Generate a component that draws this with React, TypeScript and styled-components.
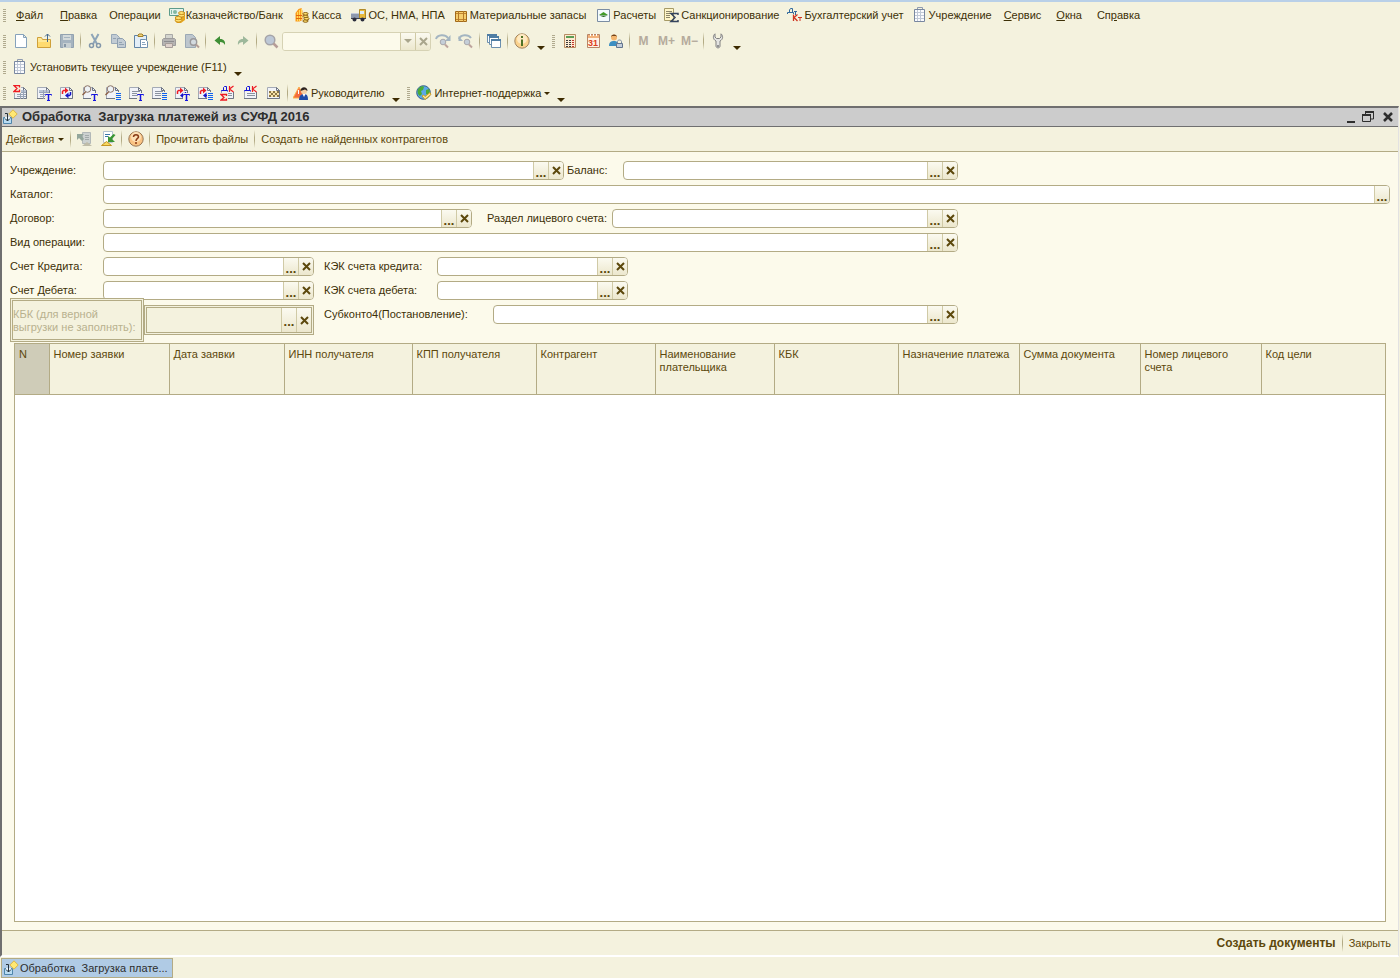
import React, { ReactNode } from "react";
import styled, { createGlobalStyle } from "styled-components";

const GlobalStyle = createGlobalStyle`
  * { box-sizing: border-box; }
  body {
    margin: 0;
    background: #f4f2de;
    color: #3d3006;
    font: 11px/13px "Liberation Sans", Arial, sans-serif;
  }
  button, input { font: inherit; color: inherit; }
  svg { display: block; flex: none; }
`;

const line = "#b3ab85";

const Shell = styled.div`
  display: flex;
  flex-direction: column;
  min-height: 100vh;
  border-top: 2px solid #b9d0e8;
`;

const Bar = styled.div`
  display: flex;
  align-items: center;
  height: 26px;
  white-space: nowrap;
`;

const Grip = styled.span<{ $before?: number; $after?: number }>`
  flex: none;
  width: 3px;
  height: 13px;
  margin: 0 ${(p) => p.$after ?? 3}px 0 ${(p) => p.$before ?? 3}px;
  background: repeating-linear-gradient(#b0aa8e 0 1px, transparent 1px 2px);
`;

const Separator = styled.span`
  flex: none;
  width: 1px;
  height: 18px;
  margin: 0 2px;
  background: linear-gradient(transparent, ${line} 40%, ${line} 60%, transparent);
`;

const MenuItem = styled.button<{ $gap: number }>`
  display: flex;
  align-items: center;
  gap: 1px;
  height: 22px;
  margin: 0 ${(p) => p.$gap}px 0 0;
  padding: 0;
  border: 0;
  background: none;
`;

const IconButton = styled.button`
  display: flex;
  flex: none;
  align-items: center;
  justify-content: center;
  width: 23px;
  height: 22px;
  padding: 0;
  border: 0;
  background: none;
`;

const WindowButton = styled(IconButton)`
  width: 20px;
  height: 18px;
`;

const MemoryButton = styled(IconButton)`
  color: #b5ab9c;
  font-size: 12px;
  font-weight: bold;
`;

const TextButton = styled.button<{ $strong?: boolean }>`
  display: flex;
  align-items: center;
  gap: 4px;
  height: 22px;
  padding: 0 4px;
  border: 0;
  background: none;
  color: #5c480c;
  font-size: ${(p) => (p.$strong ? 12 : 11)}px;
  font-weight: ${(p) => (p.$strong ? "bold" : "normal")};
`;

const LaunchButton = styled(TextButton)`
  gap: 2px;
  padding: 0 4px 0 3px;
  color: inherit;
`;

const OverflowButton = styled.button`
  display: flex;
  flex: none;
  align-items: flex-end;
  justify-content: center;
  width: 15px;
  height: 18px;
  padding: 0;
  border: 0;
  background: none;
`;

const Search = styled.div`
  display: flex;
  width: 149px;
  height: 19px;
  border: 1px solid #d6d2b4;
  border-radius: 3px;
  overflow: hidden;
`;

const SearchInput = styled.input`
  flex: 1;
  min-width: 0;
  padding: 0 3px;
  border: 0;
  outline: 0;
  background: #fcfaeb;
`;

const Window = styled.main`
  display: flex;
  flex: 1;
  flex-direction: column;
  margin-right: 1px;
  border: solid #6f6f6f;
  border-width: 2px 0 0 2px;
  border-right: 1px solid #e2e2e2;
  border-bottom: 2px solid #fff;
  background: #fcfaeb;
`;

const TitleBar = styled.header`
  display: flex;
  align-items: center;
  height: 19px;
  border-bottom: 1px solid #6f6f6f;
  background: #ccc;
  color: #2e2e2e;
`;

const Title = styled.h1`
  flex: 1;
  margin: 0 0 0 4px;
  font-size: 13px;
  line-height: 16px;
  white-space: pre;
`;

const CommandBar = styled(Bar)`
  height: 25px;
  border-bottom: 1px solid ${line};
  background: #f4f2de;
`;

const Form = styled.form`
  display: flex;
  flex-direction: column;
  gap: 5px;
  padding: 9px 8px 0;
`;

const FormRow = styled.div`
  display: flex;
  align-items: flex-start;
  white-space: nowrap;
`;

const Label = styled.label<{ $width: number; $indent?: number }>`
  flex: none;
  width: ${(p) => p.$width}px;
  margin-left: ${(p) => p.$indent ?? 0}px;
  line-height: 19px;
`;

const FieldBox = styled.div<{ $width?: number }>`
  display: flex;
  flex: ${(p) => (p.$width ? `0 0 ${p.$width}px` : "1")};
  height: 19px;
  border: 1px solid ${line};
  border-radius: 4px;
  background: #fff;
  overflow: hidden;
`;

const LockedFieldBox = styled(FieldBox)`
  height: 30px;
  border: 3px double ${line};
  border-radius: 0;
  background: #f4f2de;
`;

const LockedLabel = styled.label`
  flex: none;
  width: 134px;
  height: 44px;
  margin-top: -7px;
  padding: 7px 0 0;
  border: 3px double ${line};
  background: #f4f2de;
  color: #b8b18e;
`;

const FieldInput = styled.input`
  flex: 1;
  min-width: 0;
  padding: 0 3px;
  border: 0;
  outline: 0;
  background: transparent;
`;

const FieldButton = styled.button`
  display: flex;
  flex: none;
  align-items: center;
  justify-content: center;
  width: 15px;
  padding: 0;
  border: 0;
  border-left: 1px solid #d0caa6;
  background: linear-gradient(#fbfaf0, #ece7cd);
  color: #5c480c;
  font-weight: bold;
`;

const ChooseButton = styled(FieldButton)`
  padding-top: 3px;
  font-size: 13px;
`;

const GridFrame = styled.div`
  flex: 1;
  margin: 1px 12px 8px;
  border: 1px solid ${line};
  background: #fff;
`;

const Grid = styled.table`
  width: 100%;
  table-layout: fixed;
  border-collapse: collapse;
`;

const HeadCell = styled.th<{ $marked?: boolean }>`
  height: 50px;
  padding: 4px 4px 0;
  border-bottom: 1px solid ${line};
  border-left: 1px solid ${line};
  background: ${(p) => (p.$marked ? "#cfccb8" : "#f4f2de")};
  color: #5c480c;
  font-weight: normal;
  text-align: left;
  vertical-align: top;
  &:first-child { border-left: 0; }
`;

const Footer = styled(Bar)`
  justify-content: flex-end;
  height: 25px;
  padding-right: 3px;
  border-top: 1px solid ${line};
  background: #f4f2de;
`;

const Taskbar = styled.nav`
  height: 21px;
  padding: 1px;
`;

const TaskButton = styled.button`
  display: flex;
  align-items: center;
  gap: 1px;
  height: 20px;
  width: 172px;
  padding: 0 1px;
  border: 1px solid ${line};
  background: #b0cbe5;
  color: #2e2e2e;
  white-space: pre;
`;

const Svg = ({ children, w = 16, h = 16 }: { children: ReactNode; w?: number; h?: number }) => (
  <svg width={w} height={h} viewBox={`0 0 ${w} ${h}`} fill="none" aria-hidden="true">
    {children}
  </svg>
);

const Caret = ({ wide, color = "#3d2b00" }: { wide?: boolean; color?: string }) => (
  <Svg w={wide ? 8 : 6} h={wide ? 4 : 3}>
    <path d={wide ? "M0 0h8L4 4z" : "M0 0h6L3 3z"} fill={color} />
  </Svg>
);

const Cross = ({ color = "#5c480c" }: { color?: string }) => (
  <Svg w={9} h={9}>
    <path d="M1 1l7 7M8 1L1 8" stroke={color} strokeWidth="2" />
  </Svg>
);

const sans = "Liberation Sans, sans-serif";

const icons = {
  bank: (
    <>
      <path d="M.5 1.500h14v7H.5z" fill="#e4f2ec" stroke="#5d9b8b" />
      <circle cx="6" cy="5" r="2" fill="#82b8a5" />
      <path d="M2.500 3v4" stroke="#82b8a5" />
      <path d="M6 9.500h6V5h4v8l-4 3H8l-2-2z" fill="#e9a91f" />
      <g fill="#ffe070" stroke="#bd7d10" strokeWidth=".8">
        <ellipse cx="9.500" cy="13.500" rx="3.300" ry="1.600" />
        <ellipse cx="9.500" cy="11" rx="3.300" ry="1.600" />
        <ellipse cx="12.500" cy="8.500" rx="3" ry="1.500" />
        <ellipse cx="12.500" cy="6" rx="3" ry="1.500" />
      </g>
    </>
  ),
  cash: (
    <>
      <path d="M.5 6l3-4 3-1 1 3v9l-3 1.500h-4z" fill="#fb9b1b" />
      <path d="M2.500 5v9M4.500 3v11M6.500 2v11" stroke="#ffd95a" />
      <path d="M1 8.500h6M1 11.500h6" stroke="#e2650d" />
      <g fill="#ffe070" stroke="#7e5206" strokeWidth=".9">
        <ellipse cx="10.500" cy="14" rx="2.600" ry="1.300" />
        <ellipse cx="11.500" cy="11.700" rx="2.600" ry="1.300" />
        <ellipse cx="10.500" cy="9.200" rx="2.600" ry="1.300" />
        <ellipse cx="10.500" cy="6.800" rx="2.600" ry="1.300" />
      </g>
    </>
  ),
  truck: (
    <>
      <path d="M0 6h9v5H0z" fill="#8e99ae" />
      <path d="M0 6h9v1H0z" fill="#c2cad8" />
      <path d="M8.500 2.500h6v9h-6z" fill="#e8b93c" stroke="#b08a28" />
      <path d="M9 4h4v3H9z" fill="#dcecf8" />
      <path d="M0 11h15v1H0z" fill="#40424f" />
      <circle cx="3.500" cy="12.500" r="2" fill="#2b2d3c" />
      <circle cx="11.500" cy="12.500" r="2" fill="#2b2d3c" />
    </>
  ),
  crate: (
    <>
      <path d="M2.500 4.500h11v10h-11z" fill="#f6cd6c" stroke="#a1691a" />
      <path d="M3 6.500h10M3 12.500h10" stroke="#c08430" />
      <path d="M5.500 4v11M10.500 4v11" stroke="#b57a28" />
    </>
  ),
  exchange: (
    <>
      <path d="M1.500 2.500h12v12h-12z" fill="#f4fafd" stroke="#7b8da3" />
      <path d="M3 8l4.500-3L12 8z" fill="#3f9a27" />
      <path d="M3 8.500h9L7.500 10z" fill="#20611a" />
    </>
  ),
  sanction: (
    <>
      <path d="M.5 1.500h9v12h-9z" fill="#fff6c8" stroke="#a69a66" />
      <path d="M2 4.500h6M2 6.500h6M2 8.500h4M2 10.500h4" stroke="#8c8568" />
      <path d="M14 8V6.500H7l4 4-4 4h7V13" stroke="#34445e" strokeWidth="1.500" />
    </>
  ),
  ledger: (
    <>
      <path d="M2.500 5.500V3l1-1.500h2v4M.5 7V5.500h6V7" stroke="#31699c" />
      <path d="M7 4.500h3M8.500 4.500V8" stroke="#31699c" />
      <path d="M6.500 7.500V14M10.500 7.500L7 10.500l3.500 3.500" stroke="#cf3520" strokeWidth="1.300" />
      <path d="M11 10.500h4M13 10.500V14" stroke="#cf3520" />
    </>
  ),
  building: (
    <>
      <path d="M5.500 3V.5h5V3" stroke="#8f9bb0" />
      <path d="M2.500 2.500h10v12h-10z" fill="#fbfcfe" stroke="#7887a0" />
      <path d="M5.500 3v11M8.500 3v11M3 5.500h9M3 8.500h9M3 11.500h9" stroke="#c0c8d6" />
    </>
  ),
  fileNew: <path d="M2.500 1.500h8l3 3v10h-11z M10.500 1.500v3h3" fill="#fff" stroke="#86a2bc" />,
  open: (
    <>
      <path d="M1.500 14.500v-10h4l1 2h8v8z" fill="#ffe998" stroke="#cfa03a" />
      <path d="M2 9h12v5H2z" fill="#ffdb70" />
      <path d="M11.500 9V1M9 3.500L11.500 1 14 3.500" stroke="#43678c" />
    </>
  ),
  save: (
    <>
      <path d="M1.500 1.500h13v13h-13z" fill="#a5b3bf" stroke="#92a2b0" />
      <path d="M4 2h8v5H4z" fill="#d4dadb" />
      <path d="M4 10h8v5H4z" fill="#c7cfd2" />
      <path d="M5 11h2v3H5z" fill="#8797a6" />
      <path d="M5 4.500h6" stroke="#a5b3bf" />
    </>
  ),
  cut: (
    <>
      <path d="M4.500 1L10 11M11.500 1L6 11" stroke="#8ea5b8" strokeWidth="2" />
      <circle cx="4.500" cy="12.500" r="2" stroke="#8397aa" strokeWidth="1.500" />
      <circle cx="11.500" cy="12.500" r="2" stroke="#8397aa" strokeWidth="1.500" />
    </>
  ),
  copy: (
    <>
      <path d="M1.500 1.500h5l3 3v6h-8z" fill="#c2ccd4" stroke="#98a9b8" />
      <path d="M7.500 5.500h5l3 3v6h-8z" fill="#c2ccd4" stroke="#8e9fb0" />
      <path d="M9 9.500h3M9 11.500h5M3 5.500h3" stroke="#93a3b2" />
    </>
  ),
  paste: (
    <>
      <path d="M1.500 2.500h12v12h-12z" fill="#e3eef7" stroke="#5f83a6" />
      <path d="M5 3.500V2l1-1h3l1 1v1.500z" fill="#f4d67c" stroke="#a17f28" />
      <path d="M7.500 6.500h5l2 2v6h-7z" fill="#fff" stroke="#6f8fae" />
      <path d="M9 9.500h3M9 11.500h4" stroke="#8ba6c0" />
    </>
  ),
  print: (
    <>
      <path d="M4.500 1.500h7v5h-7z" fill="#d4d5cf" stroke="#a9a9a6" />
      <path d="M1.500 6.500l1-1h11l1 1v6h-13z" fill="#b5b4b3" stroke="#9d9c9c" />
      <path d="M4.500 10.500h7v4h-7z" fill="#dfd2cc" stroke="#a69d99" />
      <path d="M3 8.500h10" stroke="#8e8d8f" />
    </>
  ),
  preview: (
    <>
      <path d="M1.500 1.500h7l3 3v10h-10z" fill="#bdc6cd" stroke="#9ba9b5" />
      <circle cx="9.500" cy="9" r="3.200" fill="#d3dadf" stroke="#9a989a" strokeWidth="1.400" />
      <path d="M12 11.500l3 3" stroke="#b49d96" strokeWidth="2" />
    </>
  ),
  undo: <path d="M2.500 7.500L8 3v3c4 0 5.500 2.500 5 6-1-2-2.500-3-5-3v3z" fill="#3f8f35" />,
  redo: <path d="M13.500 7.500L8 3v3c-4 0-5.500 2.500-5 6 1-2 2.500-3 5-3v3z" fill="#9db89b" />,
  find: (
    <>
      <circle cx="7" cy="7" r="4.800" fill="#bdc8d6" stroke="#a5a4a8" strokeWidth="1.500" />
      <path d="M10.500 10.500l4 4" stroke="#b69d98" strokeWidth="2.500" />
    </>
  ),
  findNext: (
    <>
      <path d="M1 6c1.500-4.500 9-5 12-1" stroke="#a4b5c1" strokeWidth="2" />
      <path d="M15.500 2v6H10z" fill="#a4b5c1" />
      <circle cx="8" cy="9" r="2.800" fill="#c4ced8" stroke="#a9a8ac" />
      <path d="M10 11.500l3 3" stroke="#bda49d" strokeWidth="2" />
    </>
  ),
  findPrev: (
    <>
      <path d="M1 6c1.500-4.500 9-5 12-1" stroke="#a4b5c1" strokeWidth="2" />
      <path d="M.5 3v5H5z" fill="#a4b5c1" />
      <circle cx="9" cy="9" r="2.800" fill="#c4ced8" stroke="#a9a8ac" />
      <path d="M11 11.500l3 3" stroke="#bda49d" strokeWidth="2" />
    </>
  ),
  windows: (
    <>
      <g fill="#fff" stroke="#6b8fae">
        <path d="M1.500 1.500h9v8h-9z" />
        <path d="M3.500 3.500h9v8h-9z" />
        <path d="M5.500 6.500h9v8h-9z" />
      </g>
      <path d="M1 2h10M3 4h10M5 7h10" strokeWidth="2" stroke="#4f7da4" />
    </>
  ),
  info: (
    <>
      <circle cx="8" cy="8" r="7.200" fill="#fbd28d" stroke="#a1845e" />
      <circle cx="8" cy="6" r="5" fill="#feeac2" />
      <path d="M8 3v2M8 6.500V13" stroke="#4e7326" strokeWidth="2" />
    </>
  ),
  calculator: (
    <>
      <path d="M2.500 1.500h11v13h-11z" fill="#fdebd2" stroke="#b78d63" />
      <path d="M4 3h8v2H4z" fill="#5b9d54" />
      <path d="M5 7v7M8 7v7" stroke="#3d3d3d" strokeWidth="2" strokeDasharray="1 1" />
      <path d="M11 7v7" stroke="#c5342a" strokeWidth="2" strokeDasharray="1 1" />
    </>
  ),
  calendar: (
    <>
      <path d="M2.500 1.500h12v13h-12z" fill="#fff3e6" stroke="#b98567" />
      <path d="M3 2h11v3H3z" fill="#f2b27c" />
      <path d="M5.500 1v2M8.500 1v2M11.500 1v2" stroke="#fff" />
      <text x="3" y="13" fontFamily={sans} fontSize="9" fontWeight="bold" fill="#dd3e20">31</text>
    </>
  ),
  userLock: (
    <>
      <circle cx="6" cy="4.500" r="3" fill="#f3b56f" />
      <path d="M3 4C3 .5 9 .5 9 4L8 3H4z" fill="#70441d" />
      <path d="M1 13c0-4 2-5 5-5s4 1 4 5z" fill="#3c8fc2" />
      <path d="M9.500 10V8.500c0-2 4-2 4 0V10" stroke="#7a8ba0" />
      <path d="M8.500 10.500h6v4h-6z" fill="#c2cddb" stroke="#63758d" />
    </>
  ),
  wrench: (
    <>
      <path d="M5 .8C2.500 3 3 6.500 6 8v5c0 2.500 4 2.500 4 0V8c3-1.500 3.500-5 1-7.200V4L9.500 5.500h-3L5 4z" fill="#e4e4e2" stroke="#808080" />
      <circle cx="8" cy="13" r="1" fill="#777" />
    </>
  ),
  manager: (
    <>
      <path d="M6 2l6 11H0z" fill="#f46b3c" stroke="#fbb14b" />
      <path d="M5.500 5v4" stroke="#fff" />
      <circle cx="11" cy="6" r="3" fill="#f7d1a4" />
      <path d="M7.500 6c0-5 7-5 7 0L12 4.500z" fill="#2b2320" />
      <path d="M6 15c0-4 2-6 5-6s4 2 4 6z" fill="#1f4ca8" />
      <path d="M9.500 9l1.500 3 1.500-3z" fill="#fff" />
    </>
  ),
  globe: (
    <>
      <circle cx="7.500" cy="7.500" r="6.800" fill="#5aa8e8" stroke="#34618f" />
      <path d="M3 3c2-2 5-2 5-1L7 5 5 6l1 3-2 2C1 9 1 5 3 3zM10 5l3-1c1 2 1 4 0 6l-3-1z" fill="#4bab37" />
      <path d="M6 11l3 3.500 6-5-1-2-5 4-1.500-1.500z" fill="#ffe68c" stroke="#c89a25" />
    </>
  ),
  loadGray: (
    <>
      <path d="M5.500 1.500h8v11h-8z" fill="#ccd1d0" stroke="#b2b8b8" />
      <path d="M8 4.500h4M8 6.500h4M8 8.500h4" stroke="#a2aaaa" />
      <path d="M0 3h7L5 5l2 3-2 2-3-3-2 2z" fill="#93a69b" />
      <path d="M5 15l5-4 5 4z" fill="#bfbca8" />
    </>
  ),
  loadGreen: (
    <>
      <path d="M3.500.5h9v11h-9z" fill="#fff" stroke="#b5c2cf" />
      <path d="M5 3.500h5M5 5.500h3" stroke="#3c78a8" />
      <path d="M15.500 4L12 8l3 3H8V5l2 1.500L13.500 3z" fill="#3b9633" />
      <path d="M1.500 14.500l5-4 5 4z" fill="#f8d860" stroke="#c49623" />
    </>
  ),
  help: (
    <>
      <circle cx="8" cy="8" r="7.200" fill="#fac383" stroke="#987552" />
      <circle cx="8" cy="6" r="5" fill="#fde0b5" />
      <path d="M5.500 6c0-3 5-3 5 0 0 1.500-2.500 1.500-2.500 4M8 11v2" stroke="#8a3c17" strokeWidth="1.500" />
    </>
  ),
  processing: (
    <>
      <path d="M1.500 8.500h8v6h-8z" fill="#b9dcf2" stroke="#4f86ac" />
      <path d="M3 8h5v2H3z" fill="#e8f4fb" />
      <path d="M5.500 12V4.500H3M3 9.500L5.500 12 8 9.500" stroke="#26323c" />
      <path d="M11 .8L15.200 5 11 9.200 6.800 5z" fill="#ffe873" stroke="#dcb544" />
    </>
  ),
};

type IconName = keyof typeof icons;
const Icon = ({ name }: { name: IconName }) => <Svg>{icons[name]}</Svg>;

type Mark = "sum" | "sumLow" | "text" | "list" | "arrows" | "lens" | "dk" | "table" | "chess" | "lines";

const marks: Record<Mark, ReactNode> = {
  table: (
    <>
      <path d="M3 5h10v2H3z" fill="#b9c4d4" />
      <path d="M7.500 5v9M10.500 5v9M3 7.500h10M4 9.500h3M4 11.500h3M8 9.500h5M8 11.500h5" stroke="#98a4b6" />
    </>
  ),
  lines: <path d="M4 6.500h8M4 8.500h8M4 10.500h8" stroke="#8a92a0" />,
  sum: (
    <>
      <path d="M0 0h8v8H0z" fill="#f4f2de" />
      <path d="M6.500 2.500v-2H1L4 3.500 1 6.500h5.500v-2" stroke="#ee1c24" strokeWidth="1.300" />
    </>
  ),
  sumLow: (
    <>
      <path d="M0 8h8v8H0z" fill="#f4f2de" />
      <path d="M6.500 11V9.500H1L4 12.500l-3 2.500h5.500v-1.500" stroke="#ee1c24" strokeWidth="1.300" />
    </>
  ),
  text: (
    <>
      <path d="M9 8h7v8H9z" fill="#f4f2de" />
      <path d="M9.500 10.500v-1h6v1M11 15.500h3" stroke="#1414e0" />
      <path d="M12.500 9v7" stroke="#1414e0" strokeWidth="1.500" />
    </>
  ),
  list: (
    <>
      <path d="M10 7h6v9h-6z" fill="#f4f2de" />
      <path d="M11 8.500h5M11 10.500h5M11 12.500h5M11 14.500h5" stroke="#0f62f0" />
    </>
  ),
  arrows: (
    <>
      <path d="M3.500 9V6.500l1-1H7" stroke="#ee1c24" strokeWidth="1.500" />
      <path d="M6 2.500L9.500 5.500 6 8.500z" fill="#ee1c24" />
      <path d="M9 10.500h1.500l1-1V7" stroke="#1414c8" strokeWidth="1.500" />
      <path d="M9.500 7.500L6 10.500l3.500 3z" fill="#1414c8" />
    </>
  ),
  lens: (
    <>
      <circle cx="5.500" cy="4" r="3.300" fill="#eef2f5" stroke="#8b7468" />
      <path d="M3.500 7L.5 10" stroke="#8b5f45" strokeWidth="1.500" />
    </>
  ),
  dk: (
    <>
      <path d="M1 0h14v7H1z" fill="#f4f2de" />
      <path d="M3.500 5V2.500l1-1h2V5M1.500 6.500v-1h6v1" stroke="#1414d8" />
      <path d="M9.500 1v6M13.500 1l-4 3 4 3" stroke="#ee1c24" strokeWidth="1.200" />
    </>
  ),
  chess: (
    <>
      <path d="M3 6h10v6H3z" fill="#f6e2a8" />
      <path d="M3 7h10M5 9h8M3 11h10" stroke="#8b7546" strokeWidth="2" strokeDasharray="2 2" />
    </>
  ),
};

const Report = ({ parts }: { parts: Mark[] }) => (
  <Svg>
    <path d="M1.500 2.500h9l3 3v8h-12z" fill="#f1f3f8" stroke="#a4aab6" />
    <path d="M1 13.500h12.500V5.500l-3-3v3h3" stroke="#6f7684" />
    {parts.map((p) => (
      <g key={p}>{marks[p]}</g>
    ))}
  </Svg>
);

const menu: { label: ReactNode; icon?: IconName; gap: number }[] = [
  { label: <><u>Ф</u>айл</>, gap: 17 },
  { label: <><u>П</u>равка</>, gap: 12 },
  { label: "Операции", gap: 8 },
  { label: "Казначейство/Банк", icon: "bank", gap: 12 },
  { label: "Касса", icon: "cash", gap: 10 },
  { label: "ОС, НМА, НПА", icon: "truck", gap: 8 },
  { label: "Материальные запасы", icon: "crate", gap: 10 },
  { label: "Расчеты", icon: "exchange", gap: 8 },
  { label: "Санкционирование", icon: "sanction", gap: 8 },
  { label: "Бухгалтерский учет", icon: "ledger", gap: 8 },
  { label: "Учреждение", icon: "building", gap: 12 },
  { label: <><u>С</u>ервис</>, gap: 15 },
  { label: <><u>О</u>кна</>, gap: 15 },
  { label: <>Сп<u>р</u>авка</>, gap: 0 },
];

const tools: [IconName, string][][] = [
  [["fileNew", "Новый"], ["open", "Открыть"], ["save", "Сохранить"]],
  [["cut", "Вырезать"], ["copy", "Копировать"], ["paste", "Вставить"]],
  [["print", "Печать"], ["preview", "Просмотр"]],
  [["undo", "Отменить"], ["redo", "Вернуть"]],
];

const reports: [Mark[], string][] = [
  [["table", "sum"], "Оборотно-сальдовая ведомость"],
  [["table", "text"], "Ведомость по счету"],
  [["arrows"], "Обороты счета"],
  [["lens", "text"], "Анализ счета"],
  [["lens", "list"], "Анализ субконто"],
  [["lines", "text"], "Карточка счета"],
  [["lines", "list"], "Карточка субконто"],
  [["arrows", "text"], "Обороты"],
  [["arrows", "list"], "Обороты субконто"],
  [["lines", "dk", "sumLow"], "Сводные проводки"],
  [["lines", "dk"], "Отчет по проводкам"],
  [["chess"], "Шахматка"],
];

const columns: [string, number][] = [
  ["N", 34],
  ["Номер заявки", 120],
  ["Дата заявки", 115],
  ["ИНН получателя", 128],
  ["КПП получателя", 124],
  ["Контрагент", 119],
  ["Наименование плательщика", 119],
  ["КБК", 124],
  ["Назначение платежа", 121],
  ["Сумма документа", 121],
  ["Номер лицевого счета", 121],
  ["Код цели", 124],
];

const Overflow = () => (
  <OverflowButton type="button" aria-label="Другие кнопки">
    <Caret wide />
  </OverflowButton>
);

const Tool = ({ name, title }: { name: IconName; title: string }) => (
  <IconButton type="button" aria-label={title}>
    <Icon name={name} />
  </IconButton>
);

const FieldParts = ({ id, clearable, disabled }: { id: string; clearable: boolean; disabled?: boolean }) => (
  <>
    <FieldInput id={id} type="text" disabled={disabled} />
    <ChooseButton type="button" aria-label="Выбрать">...</ChooseButton>
    {clearable && (
      <FieldButton type="button" aria-label="Очистить">
        <Cross />
      </FieldButton>
    )}
  </>
);

interface FieldProps {
  id: string;
  label: string;
  labelWidth?: number;
  indent?: number;
  width?: number;
  clearable?: boolean;
}

const Field = ({ id, label, labelWidth = 93, indent, width, clearable = true }: FieldProps) => (
  <>
    <Label htmlFor={id} $width={labelWidth} $indent={indent}>{label}</Label>
    <FieldBox $width={width}>
      <FieldParts id={id} clearable={clearable} />
    </FieldBox>
  </>
);

export default function App() {
  return (
    <Shell>
      <GlobalStyle />
      <Bar as="nav">
        <Grip $after={10} />
        {menu.map((m, i) => (
          <MenuItem key={i} type="button" $gap={m.gap}>
            {m.icon && <Icon name={m.icon} />}
            <span>{m.label}</span>
          </MenuItem>
        ))}
      </Bar>

      <Bar>
        <Grip />
        {tools.map((group, i) => (
          <React.Fragment key={i}>
            {group.map(([name, title]) => (
              <Tool key={name} name={name} title={title} />
            ))}
            <Separator />
          </React.Fragment>
        ))}
        <Tool name="find" title="Найти" />
        <Search>
          <SearchInput type="text" aria-label="Поиск" />
          <FieldButton type="button" aria-label="История поиска"><Caret wide color="#a9a58c" /></FieldButton>
          <FieldButton type="button" aria-label="Очистить поиск"><Cross color="#a9a58c" /></FieldButton>
        </Search>
        <Tool name="findNext" title="Найти далее" />
        <Tool name="findPrev" title="Найти ранее" />
        <Separator />
        <Tool name="windows" title="Окна" />
        <Separator />
        <Tool name="info" title="Справка" />
        <Overflow />
        <Grip $before={4} />
        <Tool name="calculator" title="Калькулятор" />
        <Tool name="calendar" title="Календарь" />
        <Tool name="userLock" title="Пользователь" />
        <Separator />
        <MemoryButton type="button">M</MemoryButton>
        <MemoryButton type="button">M+</MemoryButton>
        <MemoryButton type="button">M−</MemoryButton>
        <Separator />
        <Tool name="wrench" title="Настройка" />
        <Overflow />
      </Bar>

      <Bar>
        <Grip />
        <LaunchButton type="button">
          <Icon name="building" />
          Установить текущее учреждение (F11)
        </LaunchButton>
        <Overflow />
      </Bar>

      <Bar>
        <Grip />
        {reports.map(([parts, title]) => (
          <IconButton key={title} type="button" aria-label={title}>
            <Report parts={parts} />
          </IconButton>
        ))}
        <Separator />
        <LaunchButton type="button">
          <Icon name="manager" />
          Руководителю
        </LaunchButton>
        <Overflow />
        <Grip $before={4} />
        <LaunchButton type="button">
          <Icon name="globe" />
          Интернет-поддержка
          <Caret />
        </LaunchButton>
        <Overflow />
      </Bar>

      <Window>
        <TitleBar>
          <Icon name="processing" />
          <Title>{"Обработка  Загрузка платежей из СУФД 2016"}</Title>
          <WindowButton type="button" aria-label="Свернуть">
            <Svg><path d="M7 12h8v2H7z" fill="#2e2e2e" /></Svg>
          </WindowButton>
          <WindowButton type="button" aria-label="Восстановить">
            <Svg>
              <path d="M5.500 5V3h8v7H11" stroke="#2e2e2e" />
              <path d="M2.500 6.500h8v6h-8z" stroke="#2e2e2e" />
              <path d="M5 3h9M2 6h9" stroke="#2e2e2e" strokeWidth="2" />
            </Svg>
          </WindowButton>
          <WindowButton type="button" aria-label="Закрыть окно">
            <Svg><path d="M4 4l8 8M12 4l-8 8" stroke="#2e2e2e" strokeWidth="2.500" /></Svg>
          </WindowButton>
        </TitleBar>

        <CommandBar>
          <TextButton type="button">Действия <Caret /></TextButton>
          <Separator />
          <Tool name="loadGray" title="Восстановить значения" />
          <Tool name="loadGreen" title="Сохранить значения" />
          <Separator />
          <Tool name="help" title="Справка" />
          <Separator />
          <TextButton type="button">Прочитать файлы</TextButton>
          <Separator />
          <TextButton type="button">Создать не найденных контрагентов</TextButton>
        </CommandBar>

        <Form>
          <FormRow>
            <Field id="org" label="Учреждение:" width={461} />
            <Field id="balance" label="Баланс:" labelWidth={56} indent={3} width={335} />
          </FormRow>
          <FormRow>
            <Field id="catalog" label="Каталог:" clearable={false} />
          </FormRow>
          <FormRow>
            <Field id="contract" label="Договор:" width={369} />
            <Field id="section" label="Раздел лицевого счета:" labelWidth={125} indent={15} width={346} />
          </FormRow>
          <FormRow>
            <Field id="operation" label="Вид операции:" width={855} />
          </FormRow>
          <FormRow>
            <Field id="credit" label="Счет Кредита:" width={211} />
            <Field id="creditKek" label="КЭК счета кредита:" labelWidth={113} indent={10} width={191} />
          </FormRow>
          <FormRow>
            <Field id="debit" label="Счет Дебета:" width={211} />
            <Field id="debitKek" label="КЭК счета дебета:" labelWidth={113} indent={10} width={191} />
          </FormRow>
          <FormRow>
            <LockedLabel htmlFor="kbk">
              КБК (для верной<br />выгрузки не заполнять):
            </LockedLabel>
            <LockedFieldBox $width={170}>
              <FieldParts id="kbk" clearable disabled />
            </LockedFieldBox>
            <Field id="subconto" label="Субконто4(Постановление):" labelWidth={169} indent={10} width={465} />
          </FormRow>
        </Form>

        <GridFrame>
          <Grid>
            <colgroup>
              {columns.map(([name, width]) => (
                <col key={name} width={width} />
              ))}
            </colgroup>
            <thead>
              <tr>
                {columns.map(([name], i) => (
                  <HeadCell key={name} scope="col" $marked={i === 0}>{name}</HeadCell>
                ))}
              </tr>
            </thead>
          </Grid>
        </GridFrame>

        <Footer>
          <TextButton type="button" $strong>Создать документы</TextButton>
          <Separator />
          <TextButton type="button">Закрыть</TextButton>
        </Footer>
      </Window>

      <Taskbar>
        <TaskButton type="button">
          <Icon name="processing" />
          {"Обработка  Загрузка плате..."}
        </TaskButton>
      </Taskbar>
    </Shell>
  );
}
